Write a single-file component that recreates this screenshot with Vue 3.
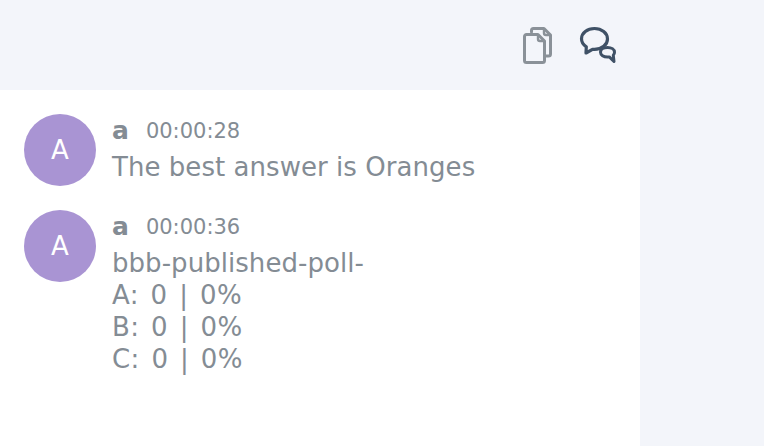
<template>
  <div class="page">
    <div class="main">
      <div class="toolbar">
        <button class="tool">
          <svg width="32" height="40" viewBox="0 0 32 40" fill="none" stroke="#8a9198" stroke-width="3" stroke-linejoin="round" stroke-linecap="round">
            <path d="M9.500 6V4.500a2 2 0 0 1 2-2H22l6.500 6.500v19a2 2 0 0 1-2 2H24" />
            <path d="M22 3.500V7a2 2 0 0 0 2 2h3.500" stroke-width="2.400" />
            <path d="M4.500 8.500H16l6.500 6.500v19.500a2 2 0 0 1-2 2h-16a2 2 0 0 1-2-2v-24a2 2 0 0 1 2-2z" fill="#f3f5fa" />
            <path d="M16 9.500V13a2 2 0 0 0 2 2h3.500" stroke-width="2.400" />
          </svg>
        </button>
        <button class="tool">
          <svg width="39" height="40" viewBox="0 0 39 40" fill="none" stroke="#3f5166" stroke-width="3.200" stroke-linejoin="round" stroke-linecap="round">
            <path d="M15.500 2.500C8.300 2.500 2.500 7 2.500 12.800c0 3.200 1.800 6 4.800 8L7 27l6.500-3.700c.7.100 1.300.1 2 .1 7.200 0 13-4.700 13-10.500S22.700 2.500 15.500 2.500z" />
            <path d="M28.500 21.500c-3.900 0-7 2-7 4.800 0 2.700 3.100 4.800 7 4.800.6 0 1.200 0 1.800-.2L35 35.500l-.7-6.200c.8-.9 1.200-1.900 1.200-3 0-2.800-3.100-4.800-7-4.800z" stroke-width="3" />
          </svg>
        </button>
      </div>
      <div class="messages">
        <div v-for="m in messages" :key="m.time" class="message">
          <div class="avatar">A</div>
          <div class="body">
            <div class="meta">
              <span class="name">a</span>
              <span class="time">{{ m.time }}</span>
            </div>
            <div v-for="line in m.lines" :key="line" class="line" :class="{ poll: line.includes('|') }">{{ line }}</div>
          </div>
        </div>
      </div>
    </div>
  </div>
</template>

<script setup>
const messages = [
  { time: "00:00:28", lines: ["The best answer is Oranges"] },
  {
    time: "00:00:36",
    lines: ["bbb-published-poll-", "A: 0 | 0%", "B: 0 | 0%", "C: 0 | 0%"],
  },
];
</script>

<style>
html,
body {
  margin: 0;
  background: #f3f5fa;
}
</style>

<style scoped>
.page {
  width: 764px;
  height: 446px;
  overflow: hidden;
  background: #f3f5fa;
  font-family: "DejaVu Sans", sans-serif;
}

.main {
  width: 640px;
  height: 446px;
  display: flex;
  flex-direction: column;
}

.toolbar {
  height: 90px;
  flex: none;
  display: flex;
  justify-content: flex-end;
  align-items: flex-start;
  gap: 25px;
  padding: 26px 22px 0 0;
  box-sizing: border-box;
}

.tool {
  background: none;
  border: 0;
  padding: 0;
  display: block;
  height: 40px;
}

.messages {
  flex: 1;
  background: #fff;
  padding: 24px;
}

.message {
  display: flex;
  margin-bottom: 24px;
}

.avatar {
  width: 72px;
  height: 72px;
  flex: none;
  border-radius: 50%;
  background: #a994d3;
  color: #fff;
  font-size: 26px;
  line-height: 72px;
  text-align: center;
}

.body {
  margin-left: 16px;
  color: #848c94;
}

.meta {
  height: 37px;
  line-height: 34px;
  white-space: nowrap;
}

.name {
  font-size: 25px;
  font-weight: 700;
}

.time {
  font-size: 21px;
  margin-left: 17px;
  vertical-align: 1px;
}

.line {
  font-size: 26px;
  line-height: 32px;
  letter-spacing: 0.05px;
}

.poll {
  word-spacing: 3px;
  letter-spacing: 0.4px;
}
</style>
